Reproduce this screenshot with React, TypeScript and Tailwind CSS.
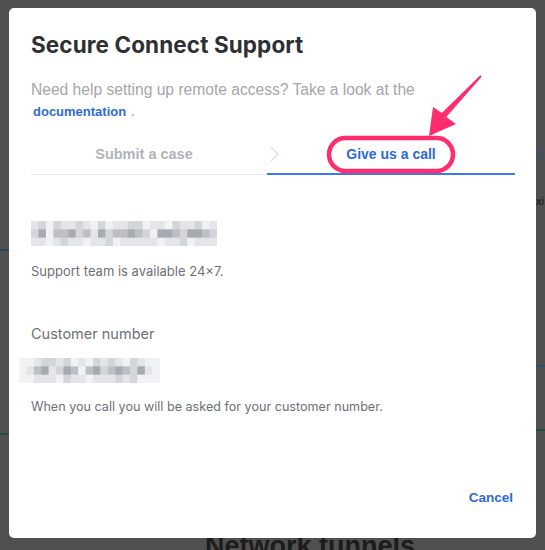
import React from 'react'

const shades: Record<string, string> = {
  '1': '#f1f2f4',
  '2': '#e3e5e8',
  '3': '#d2d5d9',
  '4': '#bcc0c6',
  '5': '#a6abb2',
}

// blurred / pixelated number
function Pixelated({ rows, cell, rowH }: { rows: string[]; cell: number; rowH: number }) {
  const cols = rows[0].length
  return (
    <svg width={cols * cell} height={rows.length * rowH} className="block">
      {rows.map((r, y) =>
        r.split('').map((c, x) =>
          shades[c] ? (
            <rect key={`${x}-${y}`} x={x * cell} y={y * rowH} width={cell + 0.5} height={rowH + 0.5} fill={shades[c]} />
          ) : null
        )
      )}
    </svg>
  )
}

const phoneRows = [
  '2313223213122331221322312',
  '3514453425344543155435543',
  '2212322122312222212231222',
]

const customerRows = [
  '1123323121323213211',
  '1245235414534543521',
  '1122213221222323111',
]

export default function App() {
  const helv = { fontFamily: '"Liberation Sans", Arial, sans-serif' }
  const inter = { fontFamily: 'Inter, "Liberation Sans", sans-serif' }

  return (
    <div className="relative w-[545px] h-[550px] overflow-hidden bg-[#505050]">
      {/* dimmed page behind the dialog */}
      <div className="flex h-full">
        <div className="w-[9px] flex flex-col">
          <div className="mt-[249px] h-[2px] bg-[#1d4a5a]" />
          <div className="mt-[182px] h-[2px] bg-[#1f4d3a]" />
        </div>
        <div className="flex-1 pt-[533px] pl-[196px]">
          <p className="text-[27px] font-bold text-[#1c1c1c] leading-none" style={helv}>
            Network tunnels
          </p>
        </div>
        <div className="w-[9px] flex flex-col">
          <div className="mt-[150px] ml-[1px] w-[6px] h-[9px] border border-[#3b4f73]" />
          <div className="mt-[37px] text-[11px] leading-none text-[#151515]" style={helv}>
            xi
          </div>
          <div className="mt-[158px] h-[2px] bg-[#2c4f6c]" />
          <div className="mt-[62px] h-[2px] bg-[#1f4d3a]" />
        </div>
      </div>

      {/* dialog */}
      <div className="absolute left-[9px] top-[8px] w-[527px] h-[530px] bg-white rounded-[5px] flex flex-col pl-[22px] pr-[21px]">
        <h1 className="pt-[23px] text-[22.5px] leading-[28px] font-bold text-[#2f3033] tracking-[0.1px]" style={inter}>
          Secure Connect Support
        </h1>
        <p className="mt-[20px] text-[15.6px] leading-[21px] text-[#a3a6ab]" style={helv}>
          Need help setting up remote access? Take a look at the
          <br />
          <span className="ml-[2px] text-[13px] font-bold text-[#2f6bd5]">documentation</span> .
        </p>

        {/* tabs */}
        <div className="mt-[10px] flex items-end" style={helv}>
          <div className="w-[236px] pt-[12px] pb-[10px] pr-[10px] border-b border-[#e6e8eb] text-center text-[14.5px] leading-[20px] font-bold text-[#b0b4ba]">
            Submit a case
          </div>
          <div className="flex-1 flex items-center pt-[12px] pb-[9px] border-b-2 border-[#3d7ae6]">
            <svg width="11" height="20" viewBox="0 0 11 20" className="ml-[2px]">
              <polyline points="2,3 9,10 2,17" fill="none" stroke="#cfdff5" strokeWidth="1.2" />
            </svg>
            <span className="flex-1 mr-[13px] text-center text-[14px] leading-[20px] font-bold text-[#2c6ad6]">
              Give us a call
            </span>
          </div>
        </div>

        <div className="mt-[46px]">
          <Pixelated rows={phoneRows} cell={7.44} rowH={8.33} />
        </div>
        <p className="mt-[16px] text-[13px] leading-[18px] text-[#6d7178]" style={inter}>
          Support team is available 24×7.
        </p>

        <p className="mt-[44px] text-[14.5px] leading-[20px] text-[#6d7178]" style={inter}>
          Customer number
        </p>
        <div className="mt-[14px] -ml-[12px]">
          <Pixelated rows={customerRows} cell={7.4} rowH={8.33} />
        </div>
        <p className="mt-[15px] text-[12.6px] leading-[18px] text-[#6d7178]" style={inter}>
          When you call you will be asked for your customer number.
        </p>

        <div className="flex-1" />
        <div className="flex justify-end pb-[31px] pr-[2px]">
          <button className="text-[13.5px] leading-[18px] font-bold text-[#2c6ad6]" style={helv}>
            Cancel
          </button>
        </div>
      </div>

      {/* annotation: pink circle + arrow */}
      <svg className="absolute left-0 top-0 pointer-events-none" width="545" height="550">
        <rect x="329" y="138" width="124" height="33" rx="16.5" fill="none" stroke="#ff2d6e" strokeWidth="4.5" />
        <polygon
          points="480.3,75.3 481.7,76.7 446.2,117.1 456,124 429,136 433,107 441.8,112.9"
          fill="#ff2d6e"
        />
      </svg>
    </div>
  )
}
